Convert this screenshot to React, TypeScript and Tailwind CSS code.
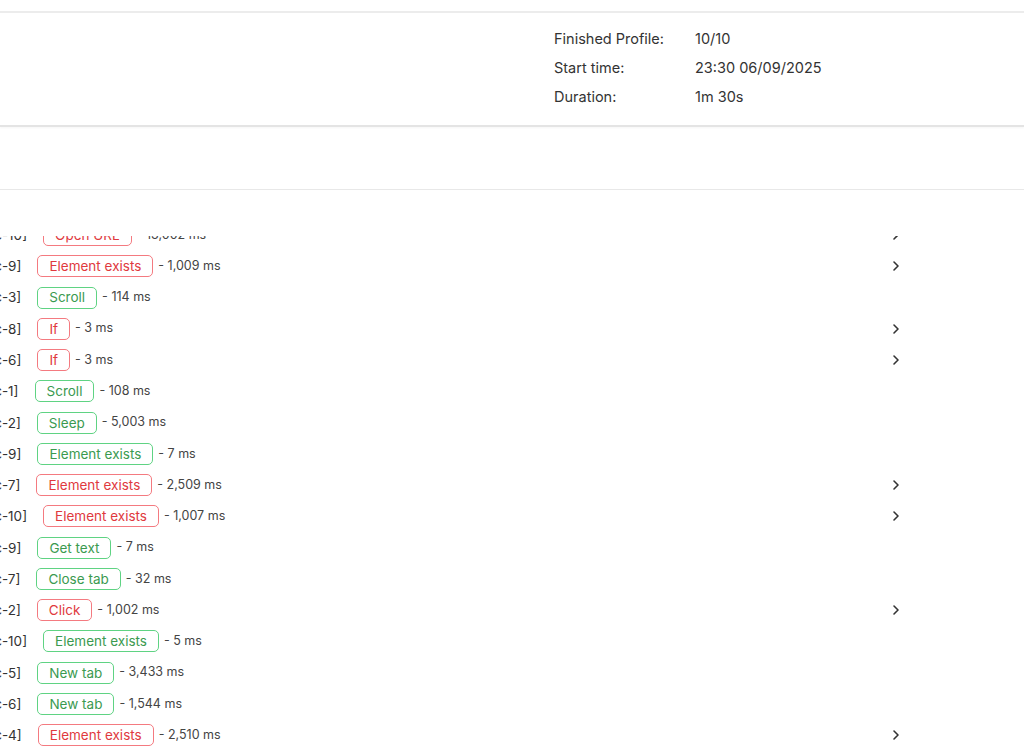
import { ChevronRight } from 'lucide-react';

type Step = {
    label: string;
    action: string;
    ok: boolean;
    time: string;
    more?: boolean;
};

const steps: Step[] = [
    { label: '[Logic-10]', action: 'Open URL', ok: false, time: '13,002 ms', more: true },
    { label: '[Logic-9]', action: 'Element exists', ok: false, time: '1,009 ms', more: true },
    { label: '[Logic-3]', action: 'Scroll', ok: true, time: '114 ms' },
    { label: '[Logic-8]', action: 'If', ok: false, time: '3 ms', more: true },
    { label: '[Logic-6]', action: 'If', ok: false, time: '3 ms', more: true },
    { label: '[Logic-1]', action: 'Scroll', ok: true, time: '108 ms' },
    { label: '[Logic-2]', action: 'Sleep', ok: true, time: '5,003 ms' },
    { label: '[Logic-9]', action: 'Element exists', ok: true, time: '7 ms' },
    { label: '[Logic-7]', action: 'Element exists', ok: false, time: '2,509 ms', more: true },
    { label: '[Logic-10]', action: 'Element exists', ok: false, time: '1,007 ms', more: true },
    { label: '[Logic-9]', action: 'Get text', ok: true, time: '7 ms' },
    { label: '[Logic-7]', action: 'Close tab', ok: true, time: '32 ms' },
    { label: '[Logic-2]', action: 'Click', ok: false, time: '1,002 ms', more: true },
    { label: '[Logic-10]', action: 'Element exists', ok: true, time: '5 ms' },
    { label: '[Logic-5]', action: 'New tab', ok: true, time: '3,433 ms' },
    { label: '[Logic-6]', action: 'New tab', ok: true, time: '1,544 ms' },
    { label: '[Logic-4]', action: 'Element exists', ok: false, time: '2,510 ms', more: true },
    { label: '[Logic-3]', action: 'Scroll', ok: true, time: '96 ms' },
];

const info = [
    { label: 'Finished Profile:', value: '10/10' },
    { label: 'Start time:', value: '23:30 06/09/2025' },
    { label: 'Duration:', value: '1m 30s' },
];

export default function App() {
    return (
        <div className="h-[749px] overflow-hidden bg-white text-[#333]" style={{ fontFamily: 'Inter, "Noto Sans", sans-serif' }}>
            {/* top strip */}
            <div className="h-[13px] border-b-2 border-[#ececec]" />

            {/* summary */}
            <div className="h-[114px] border-b-2 border-[#e4e4e4] shadow-[0_1px_2px_rgba(0,0,0,0.04)] pl-[554px] pt-[11px]">
                {info.map((row) => (
                    <div key={row.label} className="flex h-[29px] items-center text-[14.5px]">
                        <span className="w-[141px]">{row.label}</span>
                        <span>{row.value}</span>
                    </div>
                ))}
            </div>

            {/* toolbar area */}
            <div className="h-[63px] border-b border-[#e8e8e8]" />

            {/* step log */}
            <div className="pt-[46px]">
                <div className="h-[520px] overflow-hidden">
                    <div className="-mt-[16.6px] -ml-[38px] pr-[120px]">
                        {steps.map((s, i) => (
                            <div key={i} className="flex h-[31.27px] items-center text-[13.5px]">
                                <span className="text-[#333]">{s.label}</span>
                                <span
                                    className={`ml-4 inline-flex h-[22px] items-center rounded-[5px] border px-[11px] ${
                                        s.ok
                                            ? 'border-[#5fd383] text-[#3b9a50]'
                                            : 'border-[#f47a80] text-[#e0393e]'
                                    }`}
                                >
                                    {s.action}
                                </span>
                                <span className="ml-[5px] text-[12.5px] text-[#444]">- {s.time}</span>
                                <span className="ml-auto flex w-4 items-center">
                                    {s.more && <ChevronRight size={16} strokeWidth={2.4} className="text-[#333]" />}
                                </span>
                            </div>
                        ))}
                    </div>
                </div>
            </div>
        </div>
    );
}
